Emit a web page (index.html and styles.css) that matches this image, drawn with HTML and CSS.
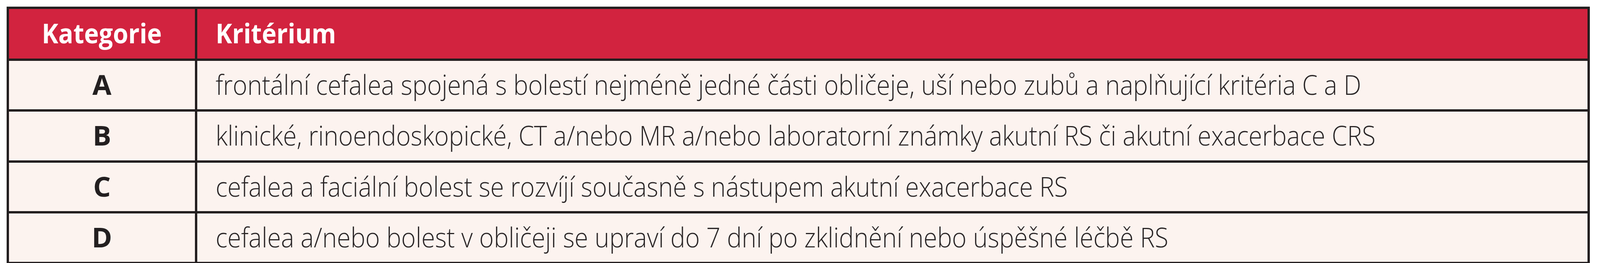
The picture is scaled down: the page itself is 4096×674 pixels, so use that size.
FILE: index.html
```html
<!DOCTYPE html>
<html lang="cs">
<head>
<meta charset="utf-8">
<title>Kritéria</title>
<link rel="stylesheet" href="styles.css">
</head>
<body>
<table class="criteria">
  <thead>
    <tr class="head-row">
      <th class="cat"><span class="head-text">Kategorie</span></th>
      <th class="crit"><span class="head-text">Kritérium</span></th>
    </tr>
  </thead>
  <tbody>
    <tr class="row-a">
      <td class="cat">A</td>
      <td class="crit"><span class="body-text">frontální cefalea spojená s bolestí nejméně jedné části obličeje, uší nebo zubů a naplňující kritéria C a D</span></td>
    </tr>
    <tr class="row-b">
      <td class="cat">B</td>
      <td class="crit"><span class="body-text">klinické, rinoendoskopické, CT a/nebo MR a/nebo laboratorní známky akutní RS či akutní exacerbace CRS</span></td>
    </tr>
    <tr class="row-c">
      <td class="cat">C</td>
      <td class="crit"><span class="body-text">cefalea a faciální bolest se rozvíjí současně s nástupem akutní exacerbace RS</span></td>
    </tr>
    <tr class="row-d">
      <td class="cat">D</td>
      <td class="crit"><span class="body-text">cefalea a/nebo bolest v obličeji se upraví do 7 dní po zklidnění nebo úspěšné léčbě RS</span></td>
    </tr>
  </tbody>
</table>
</body>
</html>
```

FILE: styles.css
```css
html, body {
  margin: 0;
  padding: 0;
  background: #ffffff;
}

.criteria {
  margin: 17px 0 0 17px;
  width: 4053px;
  table-layout: fixed;
  border-collapse: separate;
  border-spacing: 6px;
  background: #231f20;
  font-family: "Open Sans", "Noto Sans", sans-serif;
  font-size: 70.7px;
  line-height: 1;
}

.criteria th,
.criteria td {
  padding: 0 0 4px 0;
  vertical-align: middle;
  white-space: nowrap;
  overflow: visible;
}

.criteria th {
  background: #d2233f;
  color: #ffffff;
  font-weight: 700;
  height: 123px;
}

.criteria td {
  background: #fcf3ef;
  color: #231f20;
}

.cat {
  width: 476px;
  text-align: center;
}

td.cat {
  font-weight: 700;
}

.crit {
  text-align: left;
  padding-left: 47px !important;
}

.row-a td, .row-c td, .row-d td { height: 120px; }
.row-b td { height: 121px; }

.head-text {
  display: inline-block;
  transform: scaleX(0.9);
  transform-origin: left center;
}

th.cat .head-text {
  transform-origin: center center;
}

.body-text {
  display: inline-block;
  font-weight: 300;
  color: #2a2627;
  transform: scaleX(0.9);
  transform-origin: left center;
}
```
